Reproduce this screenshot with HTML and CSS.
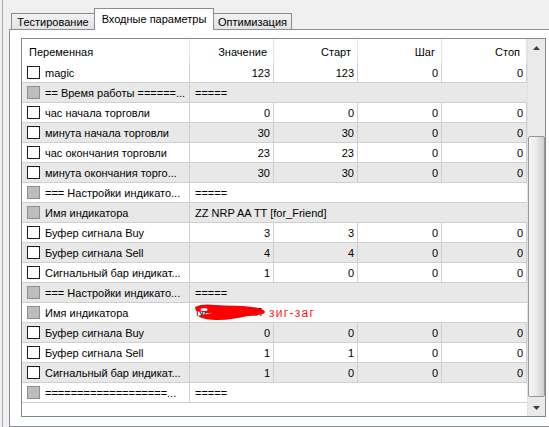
FILE: index.html
```html
<!DOCTYPE html>
<html>
<head>
<meta charset="utf-8">
<link rel="stylesheet" href="styles.css">
</head>
<body>
<div class="window">
  <div class="tabs">
    <div class="tab t1">Тестирование</div>
    <div class="tab active">Входные параметры</div>
    <div class="tab t3">Оптимизация</div>
  </div>
  <div class="panel">
    <div class="listview">
      <div class="list">
        <div class="row header">
          <div class="hc first">Переменная</div>
          <div class="hc">Значение</div>
          <div class="hc">Старт</div>
          <div class="hc">Шаг</div>
          <div class="hc">Стоп</div>
        </div>
        <div class="row"><div class="c name"><span class="cb"></span>magic</div><div class="c n">123</div><div class="c n">123</div><div class="c n">0</div><div class="c n">0</div></div>
        <div class="row alt"><div class="c name"><span class="cb dis"></span>== Время работы ======...</div><div class="c span">=====</div></div>
        <div class="row"><div class="c name"><span class="cb"></span>час начала торговли</div><div class="c n">0</div><div class="c n">0</div><div class="c n">0</div><div class="c n">0</div></div>
        <div class="row alt"><div class="c name"><span class="cb"></span>минута начала торговли</div><div class="c n">30</div><div class="c n">30</div><div class="c n">0</div><div class="c n">0</div></div>
        <div class="row"><div class="c name"><span class="cb"></span>час окончания торговли</div><div class="c n">23</div><div class="c n">23</div><div class="c n">0</div><div class="c n">0</div></div>
        <div class="row alt"><div class="c name"><span class="cb"></span>минута окончания торго...</div><div class="c n">30</div><div class="c n">30</div><div class="c n">0</div><div class="c n">0</div></div>
        <div class="row"><div class="c name"><span class="cb dis"></span>=== Настройки индикато...</div><div class="c span">=====</div></div>
        <div class="row alt"><div class="c name"><span class="cb dis"></span>Имя индикатора</div><div class="c span">ZZ NRP AA TT [for_Friend]</div></div>
        <div class="row"><div class="c name"><span class="cb"></span>Буфер сигнала Buy</div><div class="c n">3</div><div class="c n">3</div><div class="c n">0</div><div class="c n">0</div></div>
        <div class="row alt"><div class="c name"><span class="cb"></span>Буфер сигнала Sell</div><div class="c n">4</div><div class="c n">4</div><div class="c n">0</div><div class="c n">0</div></div>
        <div class="row"><div class="c name"><span class="cb"></span>Сигнальный бар индикат...</div><div class="c n">1</div><div class="c n">0</div><div class="c n">0</div><div class="c n">0</div></div>
        <div class="row alt"><div class="c name"><span class="cb dis"></span>=== Настройки индикато...</div><div class="c span">=====</div></div>
        <div class="row"><div class="c name"><span class="cb dis"></span>Имя индикатора</div><div class="c span"><span class="redact"><span class="hidden-txt">Ne</span><span class="hidden-txt tail">ИЛ</span><svg class="scribble" width="74" height="20" viewBox="0 0 74 20"><path d="M1 5 C6 2 14 2 22 3 C34 4 46 3 58 5 C64 6 70 7 71 10 C70 13 62 13 54 14 C44 16 34 18 24 18 C16 18 8 17 4 14 C8 12 14 12 18 11 C12 10 6 10 2 9 Z" fill="#ff0000"/><ellipse cx="10" cy="7.5" rx="3.5" ry="1.6" fill="#ffffff"/></svg></span><span class="red">зиг-заг</span></div></div>
        <div class="row alt"><div class="c name"><span class="cb"></span>Буфер сигнала Buy</div><div class="c n">0</div><div class="c n">0</div><div class="c n">0</div><div class="c n">0</div></div>
        <div class="row"><div class="c name"><span class="cb"></span>Буфер сигнала Sell</div><div class="c n">1</div><div class="c n">1</div><div class="c n">0</div><div class="c n">0</div></div>
        <div class="row alt"><div class="c name"><span class="cb"></span>Сигнальный бар индикат...</div><div class="c n">1</div><div class="c n">0</div><div class="c n">0</div><div class="c n">0</div></div>
        <div class="row"><div class="c name"><span class="cb dis"></span><span class="trunc">===================...</span></div><div class="c span">=====</div></div>
      </div>
      <div class="scrollbar">
        <div class="sb-btn"><svg width="7" height="4" viewBox="0 0 7 4"><path d="M0 4 L3.5 0 L7 4 Z" fill="#3c3c3c"/></svg></div>
        <div class="sb-track"><div class="thumb"></div></div>
        <div class="sb-btn"><svg width="7" height="4" viewBox="0 0 7 4"><path d="M0 0 L3.5 4 L7 0 Z" fill="#3c3c3c"/></svg></div>
      </div>
    </div>
  </div>
</div>
</body>
</html>
```
FILE: styles.css
```css
html, body {
  margin: 0;
  padding: 0;
}
body {
  width: 549px;
  height: 427px;
  overflow: hidden;
  background: #f0f0f0;
  font-family: "Liberation Sans", Arial, sans-serif;
  font-size: 11px;
  color: #000;
}
.window {
  margin-left: 2px;
  border-left: 1px solid #a8a8a8;
  height: 427px;
  padding-left: 6px;
  box-sizing: border-box;
}
.tabs {
  display: flex;
  align-items: flex-end;
  height: 21px;
  padding-top: 8px;
  margin-left: 2px;
  position: relative;
  z-index: 2;
}
.tab {
  box-sizing: border-box;
  height: 16px;
  border: 1px solid #898c95;
  border-bottom: none;
  background: linear-gradient(#f2f2f2, #e3e3e3);
  display: flex;
  align-items: center;
  justify-content: center;
  padding-top: 1px;
}
.t1 { width: 83px; border-right: none; }
.t3 { width: 78px; border-left: none; }
.tab.active {
  width: 120px;
  height: 22px;
  margin-bottom: -1px;
  background: #fff;
  padding-top: 0;
  padding-bottom: 2px;
}
.panel {
  border: 1px solid #898c95;
  border-right: none;
  background: #fff;
  height: 398px;
  padding: 8px 0 0 11px;
  box-sizing: border-box;
  position: relative;
  z-index: 1;
}
.listview {
  width: 525px;
  height: 379px;
  box-sizing: border-box;
  border: 1px solid #828790;
  display: flex;
  background: #fff;
}
.list {
  width: 505px;
  flex: none;
}
.row {
  display: grid;
  grid-template-columns: 168px 84px 84px 84px 85px;
  height: 20px;
  box-sizing: border-box;
  border-bottom: 1px solid #cfcfcf;
  background: #fff;
}
.row.alt { background: #e8e8e8; }
.row.header {
  height: 24px;
  border-bottom: none;
  background: #fff;
}
.hc {
  display: flex;
  align-items: center;
  justify-content: flex-end;
  padding: 0 6px 0 0;
  border-right: 1px solid #e3e5ea;
  white-space: nowrap;
  padding-top: 1px;
}
.hc.first {
  justify-content: flex-start;
  padding-left: 7px;
}
.c {
  display: flex;
  align-items: center;
  border-right: 1px solid #cfcfcf;
  white-space: nowrap;
  overflow: hidden;
}
.c.name {
  padding-left: 5px;
  gap: 5px;
}
.trunc {
  overflow: hidden;
  text-overflow: ellipsis;
  white-space: nowrap;
  min-width: 0;
  padding-right: 4px;
}
.c.n {
  justify-content: flex-end;
  padding-right: 3px;
}
.c.span {
  grid-column: 2 / 6;
  padding-left: 5px;
  border-right: none;
}
.cb {
  width: 13px;
  height: 13px;
  box-sizing: border-box;
  border: 1px solid #1e1e1e;
  background: #fff;
  flex: none;
}
.cb.dis {
  border-color: #8e8e8e;
  background: #bdbdbd;
}
.redact {
  position: relative;
  display: inline-block;
  width: 72px;
  height: 19px;
}
.hidden-txt {
  position: absolute;
  left: 1px;
  top: 3px;
  color: #1a1a50;
}
.hidden-txt.tail {
  left: 52px;
}
.scribble {
  position: absolute;
  left: -1px;
  top: -1px;
}
.red {
  color: #ff2020;
  font-size: 12px;
  letter-spacing: 1.3px;
  margin-left: 2px;
}
.scrollbar {
  width: 18px;
  flex: none;
  display: flex;
  flex-direction: column;
  background: #eaeaea;
  border-left: 1px solid #e2e2e2;
  box-sizing: border-box;
}
.sb-btn {
  height: 17px;
  display: flex;
  align-items: center;
  justify-content: center;
  flex: none;
}
.sb-track {
  flex: 1;
  padding-top: 80px;
  padding-bottom: 2px;
  display: flex;
  flex-direction: column;
}
.thumb {
  flex: 1;
  border: 1px solid #979797;
  border-radius: 2px;
  background: linear-gradient(to right, #f6f6f6, #ececec 45%, #dadada 80%, #cfcfcf);
}
```
